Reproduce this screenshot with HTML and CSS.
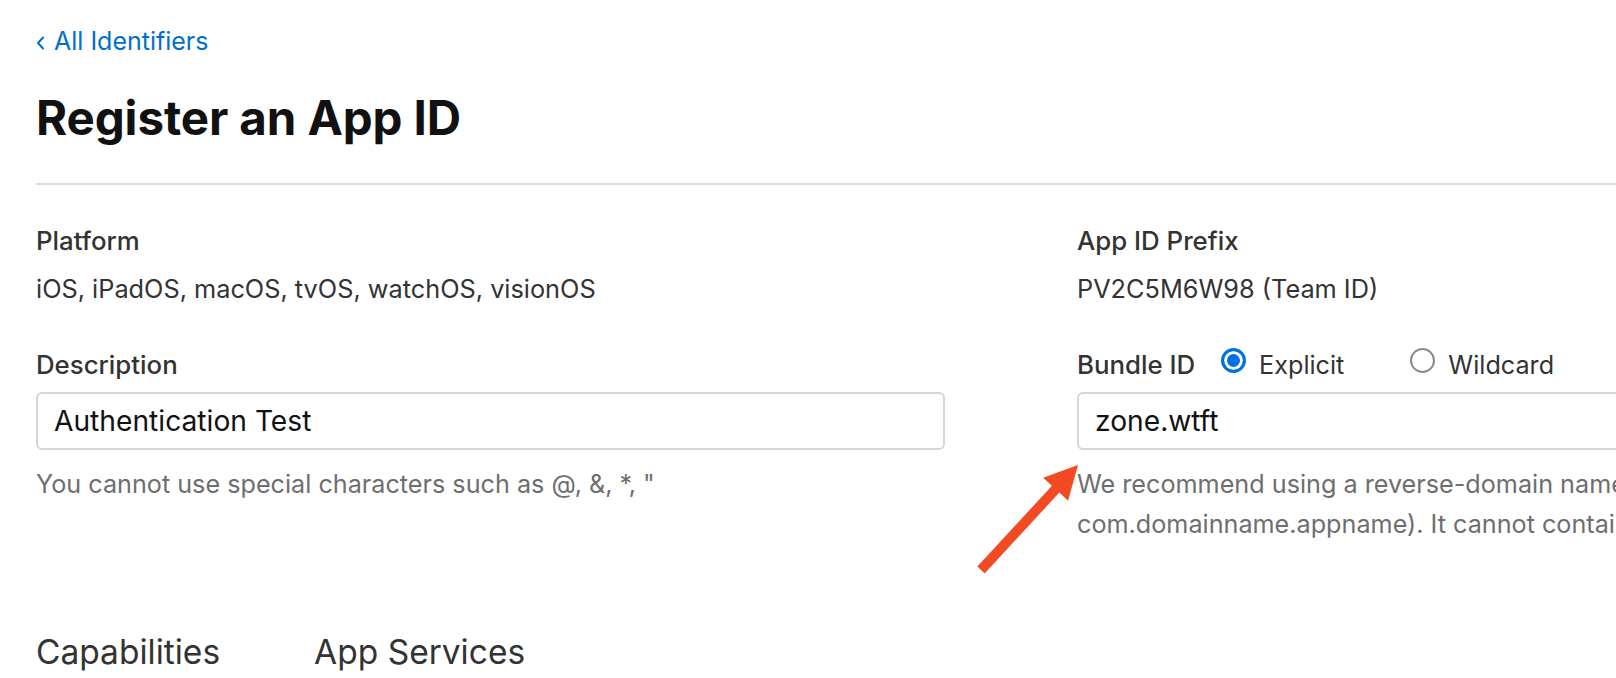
FILE: index.html
```html
<!DOCTYPE html>
<html lang="en">
<head>
<meta charset="utf-8">
<title>Register an App ID</title>
<link rel="stylesheet" href="styles.css">
</head>
<body>
<div class="page">
  <a class="back" href="#"><svg class="chev" viewBox="0 0 9 14" width="9" height="14"><path d="M7 1.5 L2 7 L7 12.5" fill="none" stroke="#0070c9" stroke-width="2" stroke-linecap="round" stroke-linejoin="round"/></svg>All Identifiers</a>
  <h1 class="title">Register an App ID</h1>
  <hr class="rule">
  <div class="form">
    <div class="col">
      <div class="field">
        <div class="label-row"><span class="label">Platform</span></div>
        <div class="value">iOS, iPadOS, macOS, tvOS, watchOS, visionOS</div>
      </div>
      <div class="field field-gap">
        <div class="label-row"><span class="label">Description</span></div>
        <input class="input" type="text" value="Authentication Test">
        <p class="help">You cannot use special characters such as @, &amp;, *, "</p>
      </div>
    </div>
    <div class="col">
      <div class="field">
        <div class="label-row"><span class="label">App ID Prefix</span></div>
        <div class="value">PV2C5M6W98 (Team ID)</div>
      </div>
      <div class="field field-gap">
        <div class="label-row">
          <span class="label">Bundle ID</span>
          <span class="radio-opt first"><span class="radio checked"></span><span class="radio-text">Explicit</span></span>
          <span class="radio-opt"><span class="radio"></span><span class="radio-text">Wildcard</span></span>
        </div>
        <input class="input" type="text" value="zone.wtft">
        <p class="help">We recommend using a reverse-domain name style string (i.e., com.domainname.appname). It cannot contain an asterisk (*).</p>
      </div>
    </div>
  </div>
  <div class="tabs">
    <span class="tab">Capabilities</span>
    <span class="tab">App Services</span>
  </div>
  <svg class="arrow" viewBox="960 455 130 130" width="130" height="130">
    <polygon points="1078,465 1068.1,500.7 1059.3,492.6 984.7,573.4 977.3,566.6 1051.9,485.8 1043.1,477.7" fill="#f24b23"/>
  </svg>
</div>
</body>
</html>
```
FILE: styles.css
```css
html, body {
  margin: 0;
  padding: 0;
  background: #fff;
}

body {
  font-family: Inter, "Noto Sans", "Liberation Sans", sans-serif;
  overflow: hidden;
  color: #333;
}

.page {
  position: relative;
  width: 1986px;
  padding: 26px 0 0 36px;
  box-sizing: border-box;
}

.back {
  display: flex;
  align-items: center;
  height: 30px;
  font-size: 25px;
  line-height: 30px;
  color: #0070c9;
  text-decoration: none;
}

.chev {
  margin: 4px 9px 0 0;
}

.title {
  margin: 37px 0 40px;
  font-size: 47.5px;
  line-height: 50px;
  font-weight: 700;
  color: #111;
  letter-spacing: -0.1px;
}

.rule {
  margin: 0;
  height: 2px;
  border: none;
  background: #dcdcdc;
}

.form {
  display: grid;
  grid-template-columns: 909px 909px;
  column-gap: 132px;
  margin-top: 41px;
  align-items: start;
}

.label-row {
  display: flex;
  align-items: center;
  height: 30px;
}

.label {
  font-size: 25.8px;
  line-height: 30px;
  font-weight: 500;
  color: #333;
}

.value {
  margin-top: 18px;
  font-size: 25.3px;
  line-height: 30px;
  color: #333;
}

.field-gap {
  margin-top: 46px;
}

.input {
  display: block;
  width: 100%;
  box-sizing: border-box;
  height: 58px;
  margin: 12px 0 0;
  padding: 0 16px;
  border: 2px solid #d6d6d6;
  border-radius: 6px;
  font-family: inherit;
  font-size: 28.2px;
  color: #111;
  background: #fff;
  outline: none;
}

.help {
  margin: 14px 0 0;
  font-size: 25.2px;
  line-height: 40px;
  color: #6e6e6e;
}

.radio-opt {
  display: flex;
  align-items: center;
  margin-left: 66px;
}

.radio-opt.first {
  margin-left: 26px;
}

.radio {
  width: 25px;
  height: 25px;
  box-sizing: border-box;
  border-radius: 50%;
  border: 2px solid #8a8a8a;
  background: #fff;
  margin-bottom: 9px;
  margin-right: 13px;
}

.radio.checked {
  border: 3px solid #0071e3;
  background: #0071e3;
  box-shadow: inset 0 0 0 3px #fff;
}

.radio-text {
  font-size: 25.2px;
  line-height: 30px;
  color: #333;
}

.tabs {
  display: flex;
  gap: 94px;
  margin-top: 88px;
}

.tab {
  font-size: 33.5px;
  line-height: 40px;
  color: #333;
}

.arrow {
  position: absolute;
  left: 960px;
  top: 455px;
}
```
